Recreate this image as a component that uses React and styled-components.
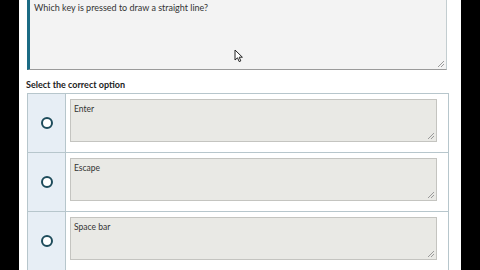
import React from "react";
import styled, { createGlobalStyle } from "styled-components";

const GlobalStyle = createGlobalStyle`
  html, body {
    margin: 0;
    padding: 0;
    background: #000;
    overflow: hidden;
  }
  body {
    font-family: "Lato", "Open Sans", sans-serif;
  }
`;

const options = ["Enter", "Escape", "Space bar"];

const ResizeGrip = () => (
  <Grip width="8" height="8" viewBox="0 0 8 8">
    <path d="M7 1 L1 7 M7 4 L4 7" stroke="#9a9a9a" strokeWidth="1" />
  </Grip>
);

const Cursor = () => (
  <CursorIcon width="10" height="14" viewBox="0 0 10 14">
    <path
      d="M1 1 L1 11 L3.5 8.8 L5.2 12.6 L6.8 11.9 L5.2 8.2 L8.4 8.2 Z"
      fill="#fff"
      stroke="#222"
      strokeWidth="1"
      strokeLinejoin="round"
    />
  </CursorIcon>
);

const App = () => {
  return (
    <>
      <GlobalStyle />
      <Page>
        <QuestionBox>
          <QuestionText>Which key is pressed to draw a straight line?</QuestionText>
          <Cursor />
          <ResizeGrip />
        </QuestionBox>
        <Label>Select the correct option</Label>
        <OptionTable>
          {options.map((text) => (
            <OptionRow key={text}>
              <RadioCell>
                <Radio />
              </RadioCell>
              <AnswerCell>
                <AnswerBox>
                  {text}
                  <ResizeGrip />
                </AnswerBox>
              </AnswerCell>
            </OptionRow>
          ))}
        </OptionTable>
      </Page>
    </>
  );
};

export default App;

const Page = styled.div`
  width: 442px;
  height: 270px;
  margin-left: 19px;
  background: #fff;
  padding: 0 12px 0 8px;
  box-sizing: border-box;
  overflow: hidden;
`;

const QuestionBox = styled.div`
  position: relative;
  height: 72px;
  margin-top: -2px;
  margin-right: 2px;
  box-sizing: border-box;
  background: #f3f3f3;
  border: 1px solid #c3cdd0;
  border-bottom: 1px solid #9a9a9a;
  border-left: 3px solid #1b6b84;
  padding: 3px 4px;
`;

const QuestionText = styled.div`
  font-size: 9px;
  color: #333;
  line-height: 12px;
`;

const CursorIcon = styled.svg`
  position: absolute;
  left: 204px;
  top: 50px;
`;

const Grip = styled.svg`
  position: absolute;
  right: 1px;
  bottom: 1px;
`;

const Label = styled.div`
  font-size: 9px;
  font-weight: 700;
  color: #222;
  margin: 8px 0 0 -1px;
  height: 15px;
  line-height: 14px;
`;

const OptionTable = styled.div`
  display: flex;
  flex-direction: column;
  border: 1px solid #b7c6cc;
  border-bottom: none;
`;

const OptionRow = styled.div`
  display: flex;
  height: 59px;
  box-sizing: border-box;
  border-bottom: 1px solid #b7c6cc;
`;

const RadioCell = styled.div`
  width: 37px;
  flex-shrink: 0;
  background: #e7eef5;
  border-right: 1px solid #b7c6cc;
  display: flex;
  align-items: center;
  justify-content: center;
`;

const Radio = styled.div`
  width: 8px;
  height: 8px;
  border-radius: 50%;
  border: 2.5px solid #1d4b5b;
  background: #fff;
`;

const AnswerCell = styled.div`
  flex: 1;
  padding: 5px 11px 10px 4px;
  background: #fff;
`;

const AnswerBox = styled.div`
  position: relative;
  height: 100%;
  box-sizing: border-box;
  background: #e9e9e5;
  border: 1px solid #c4c4c0;
  padding: 4px 3px;
  font-size: 8.5px;
  line-height: 11px;
  color: #333;
`;
